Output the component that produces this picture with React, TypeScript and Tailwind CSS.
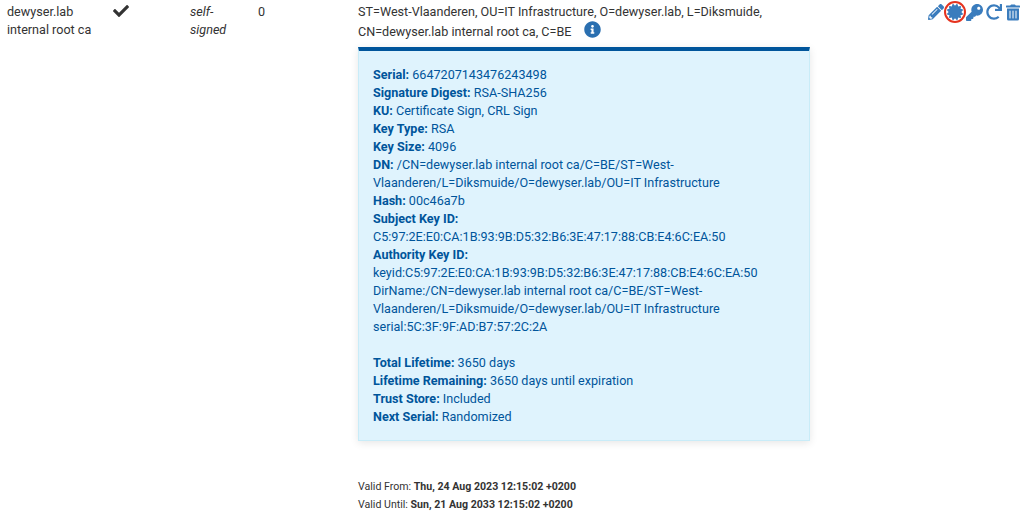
import React from 'react';
import { FaCertificate, FaCheck, FaInfoCircle, FaKey, FaPencilAlt, FaRedo, FaTrashAlt } from 'react-icons/fa';

const details: [string, string][] = [
    ['Serial:', '6647207143476243498'],
    ['Signature Digest:', 'RSA-SHA256'],
    ['KU:', 'Certificate Sign, CRL Sign'],
    ['Key Type:', 'RSA'],
    ['Key Size:', '4096'],
    ['DN:', '/CN=dewyser.lab internal root ca/C=BE/ST=West-Vlaanderen/L=Diksmuide/O=dewyser.lab/OU=IT Infrastructure'],
    ['Hash:', '00c46a7b'],
];

const lifetime: [string, string][] = [
    ['Total Lifetime:', '3650 days'],
    ['Lifetime Remaining:', '3650 days until expiration'],
    ['Trust Store:', 'Included'],
    ['Next Serial:', 'Randomized'],
];

const Line = ({ label, value }: { label: string; value: string }) => (
    <div>
        <b className="font-bold">{label}</b> {value}
    </div>
);

export default function App() {
    return (
        <div className="h-[517px] w-[1023px] overflow-hidden bg-white font-['Roboto',sans-serif] text-[12.6px] leading-[18px] text-[#333333]">
            <div className="flex items-start pt-[3px]">
                <div className="w-[105px] shrink-0 pl-[7px]">dewyser.lab internal root ca</div>
                <div className="w-[78px] shrink-0 pl-[8px]">
                    <FaCheck className="h-[16px] w-[16px] text-[#333333]" />
                </div>
                <div className="w-[68px] shrink-0 pl-[7px] pr-[20px] italic">self-signed</div>
                <div className="w-[107px] shrink-0 pl-[7px]">0</div>
                <div className="w-[452px] shrink-0">
                    <div className="w-[440px]">
                        ST=West-Vlaanderen, OU=IT Infrastructure, O=dewyser.lab, L=Diksmuide,
                        <br />
                        CN=dewyser.lab internal root ca, C=BE
                        <FaInfoCircle className="ml-[13px] inline h-[17px] w-[17px] align-[-2px] text-[#2a6fb0]" />
                    </div>
                    <div className="mt-[6px] w-[452px] border-x border-b border-[#c9ecf8] border-t-[4px] border-t-[#00559b] bg-[#dff3fd] pl-[14px] pr-[20px] pt-[15px] pb-[14px] text-[#00559b] shadow-[0_2px_8px_rgba(0,0,0,0.1)]">
                        {details.map(([label, value]) => (
                            <Line key={label} label={label} value={value} />
                        ))}
                        <div className="font-bold">Subject Key ID:</div>
                        <div>C5:97:2E:E0:CA:1B:93:9B:D5:32:B6:3E:47:17:88:CB:E4:6C:EA:50</div>
                        <div className="font-bold">Authority Key ID:</div>
                        <div>keyid:C5:97:2E:E0:CA:1B:93:9B:D5:32:B6:3E:47:17:88:CB:E4:6C:EA:50</div>
                        <div>DirName:/CN=dewyser.lab internal root ca/C=BE/ST=West-Vlaanderen/L=Diksmuide/O=dewyser.lab/OU=IT Infrastructure</div>
                        <div>serial:5C:3F:9F:AD:B7:57:2C:2A</div>
                        <div className="mt-[18px]">
                            {lifetime.map(([label, value]) => (
                                <Line key={label} label={label} value={value} />
                            ))}
                        </div>
                    </div>
                    <div className="mt-[37px] text-[10.6px]">
                        <div>
                            Valid From: <b className="font-bold">Thu, 24 Aug 2023 12:15:02 +0200</b>
                        </div>
                        <div>
                            Valid Until: <b className="font-bold">Sun, 21 Aug 2033 12:15:02 +0200</b>
                        </div>
                    </div>
                </div>
                <div className="-mt-[2px] ml-[118px] flex items-center text-[#3a7cbd]">
                    <FaPencilAlt className="h-[16px] w-[16px]" />
                    <span className="flex h-[22px] w-[22px] items-center justify-center rounded-full border-2 border-[#e5331f]">
                        <FaCertificate className="h-[16px] w-[16px]" />
                    </span>
                    <FaKey className="h-[17px] w-[17px]" />
                    <FaRedo className="ml-[3px] h-[16px] w-[16px]" />
                    <FaTrashAlt className="ml-[4px] h-[17px] w-[14px]" />
                </div>
            </div>
        </div>
    );
}
